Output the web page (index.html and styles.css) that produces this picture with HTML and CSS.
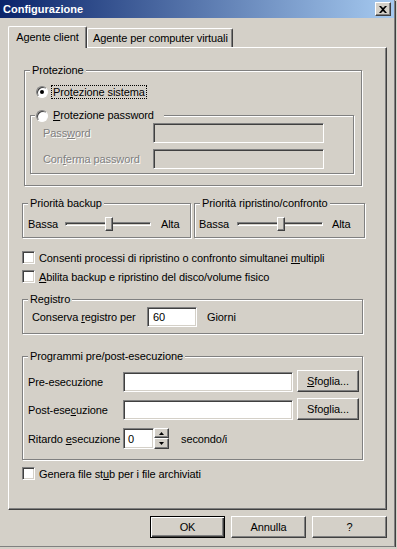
FILE: index.html
```html
<!DOCTYPE html>
<html lang="it">
<head>
    <meta charset="UTF-8">
    <title>Configurazione</title>
    <link rel="stylesheet" href="styles.css">
</head>
<body>
    <div class="window">
        <div class="titlebar">
            <span class="title">Configurazione</span>
            <span class="close">
                <svg width="8" height="7" viewBox="0 0 8 7"><path d="M0 0h2l2 2 2-2h2L5 3.5 8 7H6L4 5 2 7H0l3-3.5z" fill="#000"/></svg>
            </span>
        </div>

        <div class="tabs">
            <div class="tab active">Agente client</div>
            <div class="tab">Agente per computer virtuali</div>
        </div>

        <div class="panel">
            <!-- Protezione -->
            <div class="group g-prot">
                <div class="legend">Protezione</div>
                <div class="gbody">
                    <div class="radio-row">
                        <span class="radio checked"></span>
                        <span class="focus">Pro<u>t</u>ezione sistema</span>
                    </div>
                    <div class="group g-pass">
                        <div class="legend radio-legend">
                            <span class="radio"></span>
                            <span><u>P</u>rotezione password</span>
                        </div>
                        <div class="gbody">
                            <div class="field-row">
                                <span class="dis field-label">Pass<u>w</u>ord</span>
                                <span class="input disabled"></span>
                            </div>
                            <div class="field-row second">
                                <span class="dis field-label">Con<u>f</u>erma password</span>
                                <span class="input disabled"></span>
                            </div>
                        </div>
                    </div>
                </div>
            </div>

            <!-- Priorita -->
            <div class="prio-row">
                <div class="group g-prio left">
                    <div class="legend">Priorità backup</div>
                    <div class="gbody slider-row">
                        <span class="low">Bassa</span>
                        <span class="track"><span class="thumb"></span></span>
                        <span class="high">Alta</span>
                    </div>
                </div>
                <div class="group g-prio right">
                    <div class="legend">Priorità ripristino/confronto</div>
                    <div class="gbody slider-row">
                        <span class="low">Bassa</span>
                        <span class="track"><span class="thumb"></span></span>
                        <span class="high">Alta</span>
                    </div>
                </div>
            </div>

            <div class="check-row first">
                <span class="check"></span>
                <span>Consenti processi di ripristino o confronto simultanei <u>m</u>ultipli</span>
            </div>
            <div class="check-row">
                <span class="check"></span>
                <span><u>A</u>bilita backup e ripristino del disco/volume fisico</span>
            </div>

            <!-- Registro -->
            <div class="group g-reg">
                <div class="legend">Registro</div>
                <div class="gbody reg-row">
                    <span class="reg-label">Conserva <u>r</u>egistro per</span>
                    <span class="input reg-input">60</span>
                    <span class="days">Giorni</span>
                </div>
            </div>

            <!-- Programmi -->
            <div class="group g-prog">
                <div class="legend">Programmi pre/post-esecuzione</div>
                <div class="gbody">
                    <div class="prog-row">
                        <span class="prog-label">Pre-esecuzione</span>
                        <span class="input prog-input"></span>
                        <span class="btn browse"><u>S</u>foglia...</span>
                    </div>
                    <div class="prog-row gap">
                        <span class="prog-label">Post-ese<u>c</u>uzione</span>
                        <span class="input prog-input"></span>
                        <span class="btn browse">Sfoglia...</span>
                    </div>
                    <div class="spin-row">
                        <span class="prog-label">Ritardo <u>e</u>secuzione</span>
                        <span class="input spin-input">0</span>
                        <span class="spin">
                            <span class="btn spin-btn up"><svg width="5" height="3" viewBox="0 0 5 3"><path d="M2.5 0L5 3H0z" fill="#000"/></svg></span>
                            <span class="btn spin-btn down"><svg width="5" height="3" viewBox="0 0 5 3"><path d="M0 0h5L2.5 3z" fill="#000"/></svg></span>
                        </span>
                        <span class="unit">secondo/i</span>
                    </div>
                </div>
            </div>

            <div class="check-row stub">
                <span class="check"></span>
                <span>Genera file st<u>u</u>b per i file archiviati</span>
            </div>
        </div>

        <div class="buttons">
            <span class="btn default">OK</span>
            <span class="btn">Annulla</span>
            <span class="btn">?</span>
        </div>
    </div>
</body>
</html>
```

FILE: styles.css
```css
body {
    margin: 0;
    background-color: #d4d0c8;
    font-family: "Liberation Sans", Arial, sans-serif;
    font-size: 11px;
    letter-spacing: -0.1px;
    color: #000;
    overflow: hidden;
}
u {
    text-decoration: underline;
    text-underline-offset: 1px;
}

/* ventana */
.window {
    width: 394px;
    height: 546px;
    border-right: 1px solid #808080;
    border-bottom: 1px solid #808080;
    box-shadow: 1px 1px 0 #404040;
    background: #d4d0c8;
}
.titlebar {
    height: 18px;
    display: flex;
    align-items: center;
    justify-content: space-between;
    padding: 0 3px 0 3px;
    background: linear-gradient(to right, #0a246a, #a6caf0);
}
.title {
    color: #fff;
    font-weight: bold;
    font-size: 11px;
    letter-spacing: 0;
}
.close {
    width: 16px;
    height: 14px;
    box-sizing: border-box;
    display: flex;
    align-items: center;
    justify-content: center;
    background: #d4d0c8;
    border: 1px solid;
    border-color: #fff #404040 #404040 #fff;
    box-shadow: inset -1px -1px 0 #808080;
}

/* pestañas */
.tabs {
    display: flex;
    align-items: flex-end;
    height: 21px;
    margin: 8px 0 0 8px;
    position: relative;
    z-index: 1;
}
.tab {
    height: 19px;
    box-sizing: border-box;
    padding: 3px 4px 0 5px;
    border-top: 1px solid #fff;
    border-left: 1px solid #fff;
    border-right: 1px solid #404040;
    box-shadow: inset -1px 0 0 #808080;
    border-radius: 2px 2px 0 0;
    background: #d4d0c8;
}
.tab.active {
    width: 79px;
    height: 22px;
    margin-bottom: -1px;
    padding: 4px 0 0 0;
    text-align: center;
}

/* panel */
.panel {
    margin-left: 8px;
    width: 379px;
    height: 463px;
    box-sizing: border-box;
    border: 1px solid;
    border-color: #fff #404040 #404040 #fff;
    box-shadow: inset -1px -1px 0 #808080;
    display: flex;
    flex-direction: column;
    align-items: flex-start;
}

/* marcos */
.group {
    box-sizing: border-box;
    border: 1px solid #808080;
    box-shadow: inset 1px 1px 0 #fff, 1px 1px 0 #fff;
}
.legend {
    display: table;
    position: relative;
    height: 13px;
    line-height: 13px;
    margin: -7px 0 -6px 5px;
    padding: 0 2px;
    background: #d4d0c8;
}
.g-prot {
    margin: 22px 0 0 15px;
    width: 338px;
    height: 116px;
}
.g-prot > .gbody {
    padding: 14px 0 0 5px;
}
.radio-row {
    display: flex;
    align-items: center;
    height: 14px;
    margin-left: 6px;
}
.radio {
    width: 12px;
    height: 12px;
    box-sizing: border-box;
    border-radius: 50%;
    border: 1px solid;
    border-color: #808080 #fff #fff #808080;
    background: #fff;
    box-shadow: inset 1px 1px 0 #404040;
    display: inline-flex;
    align-items: center;
    justify-content: center;
    flex: none;
}
.radio.checked::after {
    content: "";
    width: 4px;
    height: 4px;
    border-radius: 50%;
    background: #000;
}
.focus {
    margin-left: 3px;
    padding: 0 1px;
    border: 1px dotted #000;
    line-height: 12px;
}
.g-pass {
    margin-top: 16px;
    width: 324px;
    height: 59px;
}
.g-pass > .gbody {
    padding: 7px 0 0 12px;
}
.radio-legend {
    display: flex;
    align-items: center;
    gap: 5px;
    width: max-content;
    margin-left: 4px;
    padding: 0 10px 0 1px;
}
.field-row {
    display: flex;
    align-items: center;
    height: 20px;
}
.field-row.second {
    margin-top: 6px;
}
.field-label {
    width: 110px;
}
.dis {
    color: #808080;
    text-shadow: 1px 1px 0 #fff;
}
.dis u {
    text-decoration-color: #808080;
}
.input {
    box-sizing: border-box;
    height: 20px;
    border: 1px solid;
    border-color: #808080 #fff #fff #808080;
    box-shadow: inset 1px 1px 0 #404040, inset -1px -1px 0 #d4d0c8;
    background: #fff;
    display: flex;
    align-items: center;
}
.input.disabled {
    width: 171px;
    background: #d4d0c8;
}

/* prioridad */
.prio-row {
    display: flex;
    gap: 3px;
    margin: 17px 0 0 13px;
}
.g-prio {
    height: 35px;
}
.g-prio.left {
    width: 169px;
}
.g-prio.right {
    width: 171px;
}
.slider-row {
    display: flex;
    align-items: center;
    height: 14px;
    margin-top: 13px;
    padding-left: 5px;
}
.right .slider-row {
    padding-left: 4px;
}
.low {
    width: 37px;
}
.right .low {
    width: 38px;
}
.track {
    position: relative;
    width: 86px;
    height: 4px;
    box-sizing: border-box;
    border-top: 1px solid #808080;
    border-left: 1px solid #808080;
    border-bottom: 1px solid #fff;
    border-right: 1px solid #fff;
    box-shadow: inset 1px 1px 0 #404040;
}
.thumb {
    position: absolute;
    left: 39px;
    top: -6px;
    width: 8px;
    height: 14px;
    box-sizing: border-box;
    background: #d4d0c8;
    border: 1px solid;
    border-color: #fff #404040 #404040 #fff;
    box-shadow: inset -1px -1px 0 #808080;
}
.high {
    margin-left: 10px;
}
.right .high {
    margin-left: 9px;
}

/* casillas */
.check-row {
    display: flex;
    align-items: center;
    gap: 4px;
    height: 19px;
    margin-left: 13px;
}
.check-row.first {
    margin-top: 10px;
}
.check-row.stub {
    margin-top: 4px;
}
.check {
    width: 13px;
    height: 13px;
    box-sizing: border-box;
    border: 1px solid;
    border-color: #808080 #fff #fff #808080;
    box-shadow: inset 1px 1px 0 #404040, inset -1px -1px 0 #d4d0c8;
    background: #fff;
    flex: none;
}

/* registro */
.g-reg {
    margin: 13px 0 0 13px;
    width: 341px;
    height: 35px;
}
.reg-row {
    display: flex;
    align-items: center;
    height: 20px;
    margin-top: 7px;
    padding-left: 9px;
}
.reg-label {
    width: 115px;
}
.reg-input {
    width: 50px;
    padding-left: 5px;
}
.days {
    margin-left: 10px;
}

/* programas */
.g-prog {
    margin: 22px 0 0 13px;
    width: 341px;
    height: 104px;
}
.g-prog > .gbody {
    padding: 13px 0 0 5px;
}
.prog-row {
    display: flex;
    align-items: flex-end;
    height: 22px;
}
.prog-row.gap {
    margin-top: 6px;
}
.prog-label {
    width: 95px;
    align-self: center;
    padding-top: 2px;
}
.prog-input {
    width: 170px;
}
.btn {
    box-sizing: border-box;
    display: flex;
    align-items: center;
    justify-content: center;
    background: #d4d0c8;
    border: 1px solid;
    border-color: #fff #404040 #404040 #fff;
    box-shadow: inset -1px -1px 0 #808080;
}
.browse {
    width: 62px;
    height: 22px;
    margin-left: 4px;
}
.spin-row {
    display: flex;
    align-items: center;
    height: 21px;
    margin-top: 8px;
}
.spin-row .prog-label {
    padding-top: 0;
}
.spin-input {
    width: 31px;
    height: 21px;
    padding-left: 4px;
}
.spin {
    display: flex;
    flex-direction: column;
    width: 15px;
    height: 21px;
}
.spin-btn {
    height: 10px;
}
.spin-btn.down {
    height: 11px;
}
.unit {
    margin-left: 12px;
}

/* botones */
.buttons {
    display: flex;
    gap: 6px;
    margin: 6px 0 0 150px;
}
.buttons .btn {
    width: 75px;
    height: 22px;
}
.buttons .btn.default {
    border: 1px solid #000;
    box-shadow: inset 1px 1px 0 #fff, inset -1px -1px 0 #404040, inset -2px -2px 0 #808080;
}
```
